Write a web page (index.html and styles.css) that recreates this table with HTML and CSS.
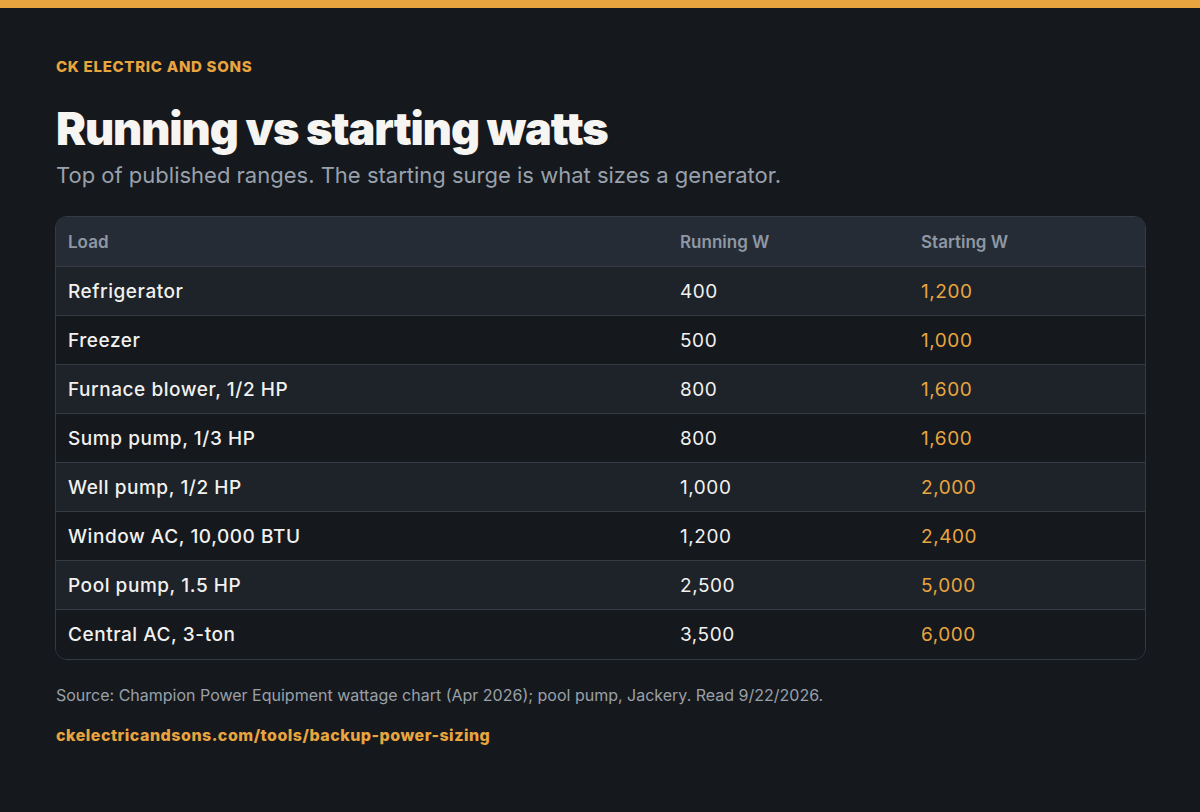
FILE: index.html
```html
<!DOCTYPE html>
<html lang="en">
<head>
<meta charset="utf-8">
<title>Running vs starting watts</title>
<link rel="stylesheet" href="styles.css">
</head>
<body>
<div class="topbar"></div>
<main class="page">
  <div class="brand">CK ELECTRIC AND SONS</div>
  <h1 class="title">Running vs starting watts</h1>
  <p class="subtitle">Top of published ranges. The starting surge is what sizes a generator.</p>
  <div class="table-wrap">
    <table class="watts">
      <thead>
        <tr><th class="c-load">Load</th><th class="c-run">Running W</th><th class="c-start">Starting W</th></tr>
      </thead>
      <tbody>
        <tr><td class="name">Refrigerator</td><td>400</td><td class="surge">1,200</td></tr>
        <tr><td class="name">Freezer</td><td>500</td><td class="surge">1,000</td></tr>
        <tr><td class="name">Furnace blower, 1/2 HP</td><td>800</td><td class="surge">1,600</td></tr>
        <tr><td class="name">Sump pump, 1/3 HP</td><td>800</td><td class="surge">1,600</td></tr>
        <tr><td class="name">Well pump, 1/2 HP</td><td>1,000</td><td class="surge">2,000</td></tr>
        <tr><td class="name">Window AC, 10,000 BTU</td><td>1,200</td><td class="surge">2,400</td></tr>
        <tr><td class="name">Pool pump, 1.5 HP</td><td>2,500</td><td class="surge">5,000</td></tr>
        <tr><td class="name">Central AC, 3-ton</td><td>3,500</td><td class="surge">6,000</td></tr>
      </tbody>
    </table>
  </div>
  <p class="source">Source: Champion Power Equipment wattage chart (Apr 2026); pool pump, Jackery. Read 9/22/2026.</p>
  <p class="url">ckelectricandsons.com/tools/backup-power-sizing</p>
</main>
</body>
</html>
```

FILE: styles.css
```css
html, body {
  margin: 0;
  padding: 0;
}
body {
  background: #15181d;
  color: #f4f3ef;
  font-family: "Inter", "Liberation Sans", sans-serif;
  width: 1200px;
  height: 812px;
  overflow: hidden;
}
.topbar {
  height: 8px;
  background: #e8a53f;
}
.page {
  padding: 0 54px 0 56px;
}
.brand {
  margin-top: 50px;
  font-size: 15px;
  font-weight: 800;
  color: #e8a53f;
  letter-spacing: 0.7px;
  line-height: 18px;
}
.title {
  margin: 27px 0 0 0;
  font-size: 45px;
  font-weight: 900;
  letter-spacing: -1.1px;
  line-height: 52px;
  color: #f6f5f1;
}
.subtitle {
  margin: 6px 0 0 0;
  font-size: 22px;
  line-height: 28px;
  color: #98a1ac;
  font-weight: 400;
}
.table-wrap {
  margin-top: 27px;
  border: 1px solid #353b44;
  border-radius: 12px;
  overflow: hidden;
  margin-left: -1px;
}
.watts {
  width: 100%;
  border-collapse: collapse;
  table-layout: fixed;
}
.watts th {
  background: #262c35;
  color: #8e98a4;
  font-size: 17px;
  font-weight: 600;
  text-align: left;
  height: 49px;
  padding: 0 12px;
  border-bottom: 1px solid #363c45;
}
.c-load { width: 588px; }
.c-run { width: 217px; }
.watts td {
  height: 48px;
  padding: 0 12px;
  font-size: 19px;
  letter-spacing: 0.55px;
  color: #f1f1ef;
  border-bottom: 1px solid #363c45;
}
.watts tbody tr:last-child td {
  height: 49px;
}
.watts tbody tr:nth-child(odd) td {
  background: #1e2229;
}
.watts tbody tr:nth-child(even) td {
  background: #15181d;
}
.watts tbody tr:last-child td {
  border-bottom: none;
}
.watts td.name {
  font-weight: 500;
}
.watts td.surge {
  color: #e8a53f;
}
.source {
  margin: 24px 0 0 0;
  font-size: 16px;
  line-height: 22px;
  color: #9aa0a8;
}
.url {
  margin: 19px 0 0 0;
  font-size: 16px;
  line-height: 20px;
  font-weight: 800;
  letter-spacing: 0.5px;
  color: #e8a53f;
}
```
